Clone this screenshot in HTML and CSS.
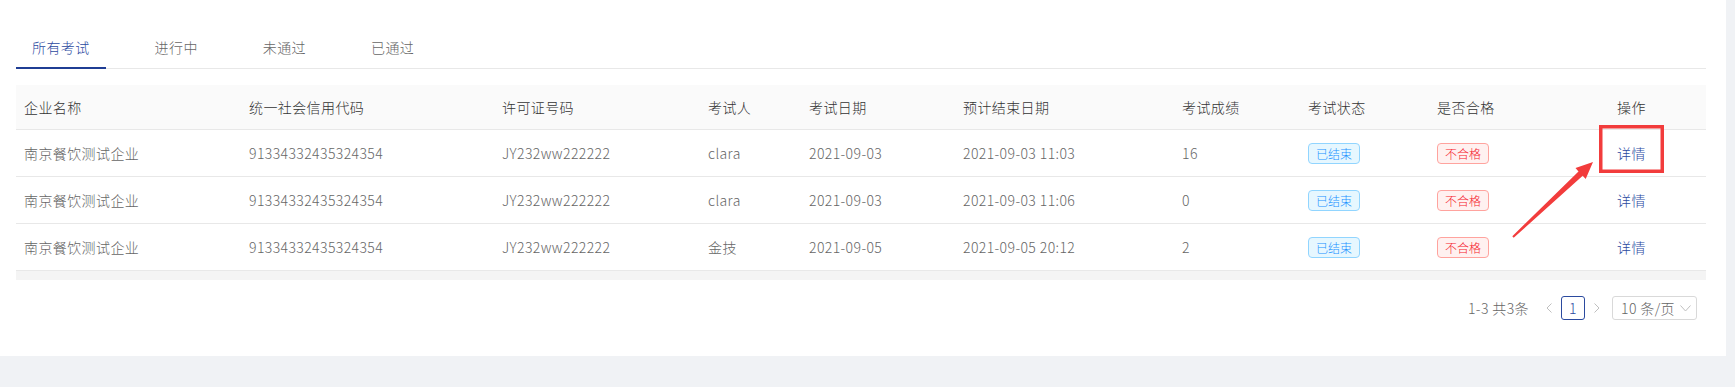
FILE: index.html
```html
<!DOCTYPE html>
<html lang="zh-CN">
<head>
    <meta charset="UTF-8">
    <meta name="viewport" content="width=device-width, initial-scale=1.0">
    <title>考试列表</title>
    <link rel="stylesheet" href="styles.css">
</head>
<body>
    <div class="card">
        <div class="tabs">
            <div class="tab active">所有考试</div>
            <div class="tab">进行中</div>
            <div class="tab">未通过</div>
            <div class="tab">已通过</div>
        </div>

        <table class="exam-table">
            <colgroup>
                <col style="width: 225px">
                <col style="width: 253px">
                <col style="width: 206px">
                <col style="width: 101px">
                <col style="width: 154px">
                <col style="width: 219px">
                <col style="width: 126px">
                <col style="width: 129px">
                <col style="width: 180px">
                <col style="width: 97px">
            </colgroup>
            <thead>
                <tr>
                    <th>企业名称</th>
                    <th>统一社会信用代码</th>
                    <th>许可证号码</th>
                    <th>考试人</th>
                    <th>考试日期</th>
                    <th>预计结束日期</th>
                    <th>考试成绩</th>
                    <th>考试状态</th>
                    <th>是否合格</th>
                    <th>操作</th>
                </tr>
            </thead>
            <tbody>
                <tr>
                    <td>南京餐饮测试企业</td>
                    <td>91334332435324354</td>
                    <td>JY232ww222222</td>
                    <td>clara</td>
                    <td>2021-09-03</td>
                    <td>2021-09-03 11:03</td>
                    <td>16</td>
                    <td><span class="tag tag-blue">已结束</span></td>
                    <td><span class="tag tag-red">不合格</span></td>
                    <td><a class="link">详情</a></td>
                </tr>
                <tr>
                    <td>南京餐饮测试企业</td>
                    <td>91334332435324354</td>
                    <td>JY232ww222222</td>
                    <td>clara</td>
                    <td>2021-09-03</td>
                    <td>2021-09-03 11:06</td>
                    <td>0</td>
                    <td><span class="tag tag-blue">已结束</span></td>
                    <td><span class="tag tag-red">不合格</span></td>
                    <td><a class="link">详情</a></td>
                </tr>
                <tr>
                    <td>南京餐饮测试企业</td>
                    <td>91334332435324354</td>
                    <td>JY232ww222222</td>
                    <td>金技</td>
                    <td>2021-09-05</td>
                    <td>2021-09-05 20:12</td>
                    <td>2</td>
                    <td><span class="tag tag-blue">已结束</span></td>
                    <td><span class="tag tag-red">不合格</span></td>
                    <td><a class="link">详情</a></td>
                </tr>
            </tbody>
        </table>
        <div class="scroll-track"></div>

        <div class="pagination">
            <span class="total">1-3 共3条</span>
            <span class="page-arrow prev">
                <svg width="6" height="10" viewBox="0 0 6 10"><path d="M5.5 0.5 L1 5 L5.5 9.5" fill="none" stroke="#bfbfbf" stroke-width="1"/></svg>
            </span>
            <span class="page-item current">1</span>
            <span class="page-arrow next">
                <svg width="6" height="10" viewBox="0 0 6 10"><path d="M0.5 0.5 L5 5 L0.5 9.5" fill="none" stroke="#bfbfbf" stroke-width="1"/></svg>
            </span>
            <span class="page-size">
                10 条/页
                <svg width="11" height="7" viewBox="0 0 11 7"><path d="M0.5 0.5 L5.5 6 L10.5 0.5" fill="none" stroke="#bfbfbf" stroke-width="1"/></svg>
            </span>
        </div>

        <!-- adnotacja: ramka i strzałka -->
        <svg class="annotation" width="1726" height="356" viewBox="0 0 1726 356">
            <rect x="1600.75" y="126.75" width="61.5" height="44.5" fill="none" stroke="#f23c3c" stroke-width="3.5"/>
            <polygon points="1512.3,236.3 1578.5,171.4 1575.5,168.1 1593,162 1585.7,179.1 1582.7,175.8 1513.7,237.7" fill="#f23c3c"/>
        </svg>
    </div>
</body>
</html>
```

FILE: styles.css
```css
body {
    margin: 0;
    background-color: #f0f2f5;
    font-family: "Noto Sans CJK SC", "Noto Sans", sans-serif;
    font-size: 14px;
    font-weight: 300;
    letter-spacing: 0.4px;
    color: #666;
    height: 387px;
    overflow: hidden;
}
.card {
    position: relative;
    width: 1726px;
    height: 356px;
    box-sizing: border-box;
    padding: 27px 20px 0 16px;
    background-color: #fff;
}
.tabs {
    display: flex;
    border-bottom: 1px solid #e8e8e8;
}
.tab {
    padding: 10px 16px 9px;
    margin-right: 33px;
    margin-bottom: -1px;
    line-height: 21px;
    border-bottom: 2px solid transparent;
    color: #666;
    cursor: pointer;
}
.tab.active {
    color: #2b4a9f;
    border-bottom-color: #1f3d94;
}
.exam-table {
    margin-top: 16px;
    width: 1690px;
    table-layout: fixed;
    border-collapse: collapse;
}
.exam-table th,
.exam-table td {
    padding: 0 8px;
    text-align: left;
    white-space: nowrap;
    border-bottom: 1px solid #e8e8e8;
    line-height: 20px;
}
.exam-table th {
    height: 44px;
    background-color: #fafafa;
    font-weight: 300;
    color: #333;
}
.exam-table td {
    height: 46px;
    color: #666;
}
.tag {
    display: inline-block;
    height: 21px;
    box-sizing: border-box;
    padding: 0 7px;
    font-size: 12px;
    line-height: 19px;
    letter-spacing: 0;
    border-radius: 4px;
    border: 1px solid;
    vertical-align: middle;
}
.tag-blue {
    color: #1890ff;
    background-color: #e6f7ff;
    border-color: #91d5ff;
}
.tag-red {
    color: #f5222d;
    background-color: #fff1f0;
    border-color: #ffa39e;
}
.link {
    color: #2b4a9f;
    cursor: pointer;
}
.scroll-track {
    width: 1690px;
    height: 9px;
    background-color: #f4f4f4;
}
.pagination {
    display: flex;
    justify-content: flex-end;
    align-items: center;
    margin-top: 16px;
    margin-right: 9px;
    height: 24px;
    line-height: 22px;
}
.total {
    margin-right: 10px;
    color: #666;
}
.page-arrow {
    display: flex;
    align-items: center;
    justify-content: center;
    height: 24px;
}
.prev {
    width: 20px;
    margin-right: 2px;
}
.next {
    width: 12px;
    margin-left: 6px;
    margin-right: 9px;
}
.page-item {
    width: 24px;
    height: 24px;
    box-sizing: border-box;
    text-align: center;
    border: 1px solid #2b4a9f;
    border-radius: 3px;
    color: #2b4a9f;
}
.page-size {
    display: flex;
    align-items: center;
    gap: 5px;
    width: 85px;
    height: 24px;
    box-sizing: border-box;
    padding-left: 8px;
    border: 1px solid #d9d9d9;
    border-radius: 3px;
    color: #666;
}
.annotation {
    position: absolute;
    left: 0;
    top: 0;
    pointer-events: none;
}
```
